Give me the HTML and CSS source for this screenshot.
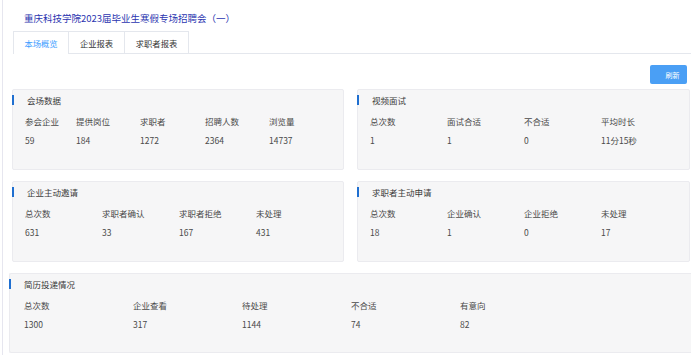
FILE: index.html
```html
<!DOCTYPE html>
<html lang="zh-CN">

<head>
    <meta charset="UTF-8">
    <meta name="viewport" content="width=device-width, initial-scale=1.0">
    <title>本场概览</title>
    <link rel="stylesheet" href="styles.css">
</head>

<body>
    <div id="page">
        <h1 class="title">重庆科技学院2023届毕业生寒假专场招聘会（一）</h1>

        <div class="tabs">
            <div class="tab active">本场概览</div>
            <div class="tab">企业报表</div>
            <div class="tab">求职者报表</div>
        </div>

        <div class="toolbar">
            <button type="button" class="btn-refresh">刷新</button>
        </div>

        <div class="grid">
            <div class="card">
                <div class="card-title">会场数据</div>
                <div class="stats stats-venue">
                    <div class="stat"><span class="label">参会企业</span><span class="value">59</span></div>
                    <div class="stat"><span class="label">提供岗位</span><span class="value">184</span></div>
                    <div class="stat"><span class="label">求职者</span><span class="value">1272</span></div>
                    <div class="stat"><span class="label">招聘人数</span><span class="value">2364</span></div>
                    <div class="stat"><span class="label">浏览量</span><span class="value">14737</span></div>
                </div>
            </div>

            <div class="card">
                <div class="card-title">视频面试</div>
                <div class="stats stats-four">
                    <div class="stat"><span class="label">总次数</span><span class="value">1</span></div>
                    <div class="stat"><span class="label">面试合适</span><span class="value">1</span></div>
                    <div class="stat"><span class="label">不合适</span><span class="value">0</span></div>
                    <div class="stat"><span class="label">平均时长</span><span class="value">11分15秒</span></div>
                </div>
            </div>

            <div class="card">
                <div class="card-title">企业主动邀请</div>
                <div class="stats stats-four">
                    <div class="stat"><span class="label">总次数</span><span class="value">631</span></div>
                    <div class="stat"><span class="label">求职者确认</span><span class="value">33</span></div>
                    <div class="stat"><span class="label">求职者拒绝</span><span class="value">167</span></div>
                    <div class="stat"><span class="label">未处理</span><span class="value">431</span></div>
                </div>
            </div>

            <div class="card">
                <div class="card-title">求职者主动申请</div>
                <div class="stats stats-four">
                    <div class="stat"><span class="label">总次数</span><span class="value">18</span></div>
                    <div class="stat"><span class="label">企业确认</span><span class="value">1</span></div>
                    <div class="stat"><span class="label">企业拒绝</span><span class="value">0</span></div>
                    <div class="stat"><span class="label">未处理</span><span class="value">17</span></div>
                </div>
            </div>
        </div>

        <div class="card card-wide">
            <div class="card-title">简历投递情况</div>
            <div class="stats stats-six">
                <div class="stat"><span class="label">总次数</span><span class="value">1300</span></div>
                <div class="stat"><span class="label">企业查看</span><span class="value">317</span></div>
                <div class="stat"><span class="label">待处理</span><span class="value">1144</span></div>
                <div class="stat"><span class="label">不合适</span><span class="value">74</span></div>
                <div class="stat"><span class="label">有意向</span><span class="value">82</span></div>
            </div>
        </div>
    </div>
</body>

</html>
```

FILE: styles.css
```css
body {
    font-family: "Noto Sans CJK SC", "Noto Sans", sans-serif;
    background-color: #fff;
    margin: 0;
    color: #444;
}

#page {
    width: 689px;
    height: 355px;
    margin-left: 2px;
    border-left: 1px solid #e6e6ef;
    box-sizing: border-box;
    overflow: hidden;
}

.title {
    margin: 0;
    padding: 12px 0 0 21px;
    font-size: 9.5px;
    font-weight: normal;
    line-height: 12px;
    color: #2b35b0;
}

.tabs {
    display: flex;
    margin: 7px 0 0 10px;
    border-bottom: 1px solid #e4e7ed;
}

.tab {
    height: 22px;
    line-height: 22px;
    padding: 0;
    font-size: 8.3px;
    color: #333;
    border: 1px solid #e4e7ed;
    border-left: none;
    border-bottom: none;
    box-sizing: border-box;
    width: 56px;
    text-align: center;
    white-space: nowrap;
}

.tab:first-child {
    border-left: 1px solid #e4e7ed;
    width: 56px;
}

.tab:last-child {
    width: 64px;
}

.tab.active {
    color: #409eff;
    margin-bottom: -1px;
    height: 23px;
    background-color: #fff;
}

.toolbar {
    display: flex;
    justify-content: flex-end;
    padding: 11px 4px 0 0;
}

.btn-refresh {
    width: 37px;
    height: 19px;
    padding: 0 0 0 8px;
    border: none;
    border-radius: 2px;
    background-color: #4a9ff5;
    color: #fff;
    font-family: inherit;
    font-size: 7px;
}

.grid {
    display: grid;
    grid-template-columns: 332px 333px;
    column-gap: 13px;
    row-gap: 11px;
    margin: 5px 0 0 9px;
}

.card {
    height: 81px;
    background-color: #f6f6f7;
    border: 1px solid #ebebef;
    border-radius: 2px;
    box-sizing: border-box;
    padding-top: 5px;
}

.card-title {
    font-size: 8.5px;
    line-height: 10px;
    height: 10px;
    color: #3a3a3a;
    padding-left: 13px;
    border-left: 2px solid #1f6fd0;
    margin-left: -1px;
}

.stats {
    display: grid;
    margin-top: 10px;
    padding-left: 12px;
}

.stats-venue {
    grid-template-columns: 51px 64px 65px 64px 64px;
}

.stats-four {
    grid-template-columns: repeat(4, 77px);
}

.stats-six {
    grid-template-columns: repeat(5, 109px);
    padding-left: 14px;
}

.stat {
    display: flex;
    flex-direction: column;
    gap: 7px;
    font-size: 8.5px;
    line-height: 12px;
    color: #4a4a4a;
}

.card-wide {
    margin: 11px 0 0 6px;
    width: 684px;
    height: 80px;
    border-right: none;
}
```
